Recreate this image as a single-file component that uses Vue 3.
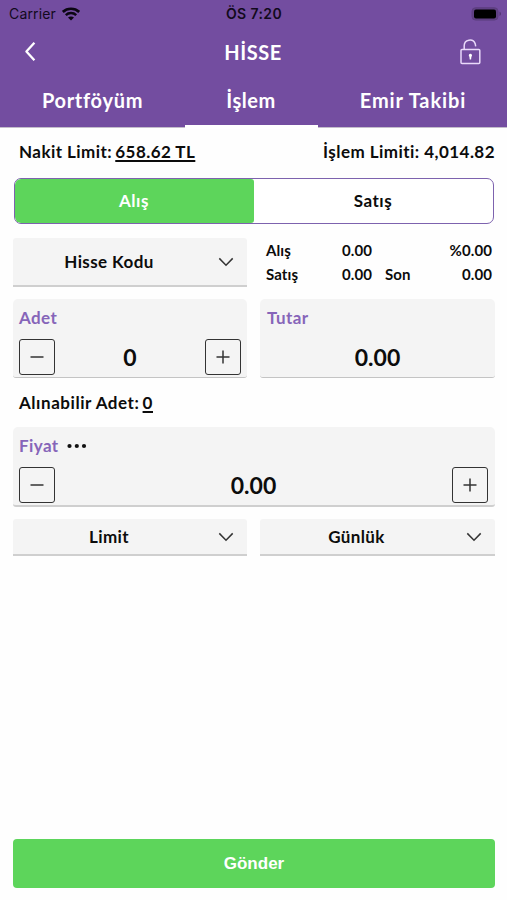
<script setup>
import { ref } from 'vue';

const tabs = ['Portföyüm', 'İşlem', 'Emir Takibi'];
const activeTab = ref(1);
const side = ref('buy');
const quantity = ref(0);
const price = ref(0);

const step = (field, amount) => {
  field.value = Math.max(0, field.value + amount);
};
const stepQuantity = (amount) => step(quantity, amount);
const stepPrice = (amount) => step(price, amount);
</script>

<template>
  <div class="screen">
    <header class="header">
      <div class="status">
        <div class="carrier">
          <span>Carrier</span>
          <svg width="18" height="14" viewBox="0 0 18 14">
            <path d="M.8 4.9C5.2.7 12.8.7 17.2 4.9" fill="none" stroke="#0b0612" stroke-width="2.7" />
            <path d="M3.8 8.1c2.9-2.7 7.5-2.7 10.4 0" fill="none" stroke="#0b0612" stroke-width="2.5" />
            <path d="M6 10.6c1.6-1.5 4.4-1.5 6 0l-3 2.9z" fill="#0b0612" />
          </svg>
        </div>
        <span class="time">ÖS 7:20</span>
        <svg class="battery" width="31" height="14" viewBox="0 0 31 14">
          <rect x="1" y=".7" width="26" height="12.4" rx="3.6" fill="#614184" stroke="#5d3f80" />
          <rect x="3" y="2.4" width="22" height="9" rx="2" fill="#000" />
          <path d="M28.5 4.8c2 .7 2 3.5 0 4.2z" fill="#543676" />
        </svg>
      </div>

      <div class="navbar">
        <svg class="back" width="12" height="21" viewBox="0 0 12 21">
          <path d="M10.4 1.7 2.4 10.5l8 8.8" fill="none" stroke="#fff" stroke-width="2.3" stroke-linejoin="round" />
        </svg>
        <h1 class="title">HİSSE</h1>
        <svg class="lock" width="22" height="27" viewBox="0 0 22 27">
          <g fill="none" stroke="#e9d9fa" stroke-width="1.5">
            <rect x="1" y="11.4" width="18.8" height="14" rx="1" />
            <path d="M4.2 11.4V7.8a5.7 5.7 0 0 1 11-2.1l.5 2.6" />
          </g>
          <path d="M10.4 15.8a1.7 1.7 0 0 1 1 3l-.3 2.7H9.7l-.3-2.7a1.7 1.7 0 0 1 1-3z" fill="#fff" />
        </svg>
      </div>

      <nav class="tabs">
        <a v-for="(tab, i) in tabs" :key="tab" class="tab" :class="{ active: i === activeTab }" @click="activeTab = i">{{ tab }}</a>
      </nav>
    </header>

    <main class="content">
      <div class="limits">
        <span class="cash">Nakit Limit: <u>658.62 TL</u></span>
        <span class="trade">İşlem Limiti: 4,014.82</span>
      </div>

      <div class="segment">
        <button :class="{ selected: side === 'buy' }" @click="side = 'buy'">Alış</button>
        <button :class="{ selected: side === 'sell' }" @click="side = 'sell'">Satış</button>
      </div>

      <div class="row symbol-row">
        <div class="select tall">
          <span>Hisse Kodu</span>
          <svg class="chevron" width="16" height="10" viewBox="0 0 16 10"><path d="m1.3 1.4 6.7 6.8 6.7-6.8" /></svg>
        </div>
        <div class="quotes">
          <span>Alış</span><span class="num">0.00</span><span></span><span class="num">%0.00</span>
          <span>Satış</span><span class="num">0.00</span><span>Son</span><span class="num">0.00</span>
        </div>
      </div>

      <div class="row amount-row">
        <div class="field">
          <div class="label">Adet</div>
          <div class="stepper">
            <button @click="stepQuantity(-1)"><svg width="34" height="34" viewBox="0 0 34 34"><path d="M10.5 17h13" /></svg></button>
            <span class="value">{{ quantity }}</span>
            <button @click="stepQuantity(1)"><svg width="34" height="34" viewBox="0 0 34 34"><path d="M10.5 17h13M17 10.5v13" /></svg></button>
          </div>
        </div>
        <div class="field total">
          <div class="label">Tutar</div>
          <div class="stepper"><span class="value">0.00</span></div>
        </div>
      </div>

      <div class="available">Alınabilir Adet: <u>{{ quantity }}</u></div>

      <div class="field price">
        <div class="label">
          <span>Fiyat</span>
          <svg width="20" height="6" viewBox="0 0 20 6">
            <circle cx="2.5" cy="3" r="2.1" /><circle cx="9.8" cy="3" r="2.1" /><circle cx="17" cy="3" r="2.1" />
          </svg>
        </div>
        <div class="stepper">
          <button @click="stepPrice(-1)"><svg width="34" height="34" viewBox="0 0 34 34"><path d="M10.5 17h13" /></svg></button>
          <span class="value">{{ price.toFixed(2) }}</span>
          <button @click="stepPrice(1)"><svg width="34" height="34" viewBox="0 0 34 34"><path d="M10.5 17h13M17 10.5v13" /></svg></button>
        </div>
      </div>

      <div class="row type-row">
        <div class="select">
          <span>Limit</span>
          <svg class="chevron" width="16" height="10" viewBox="0 0 16 10"><path d="m1.3 1.4 6.7 6.8 6.7-6.8" /></svg>
        </div>
        <div class="select">
          <span>Günlük</span>
          <svg class="chevron" width="16" height="10" viewBox="0 0 16 10"><path d="m1.3 1.4 6.7 6.8 6.7-6.8" /></svg>
        </div>
      </div>

      <button class="submit">Gönder</button>
    </main>
  </div>
</template>

<style>
body { margin: 0; background: #fefefe; }
</style>

<style scoped>
* { box-sizing: border-box; }
.screen {
  width: 507px;
  height: 900px;
  display: flex;
  flex-direction: column;
  background: #fefefe;
  color: #0c0c0c;
  font-family: Lato, sans-serif;
  font-weight: 700;
  font-size: 17px;
  letter-spacing: 0.4px;
  font-variant-ligatures: none;
  overflow: hidden;
}
button { font: inherit; letter-spacing: inherit; color: inherit; padding: 0; margin: 0; border: 0; background: none; }

.header { height: 128px; flex: none; background: #734da0; border-bottom: 1px solid #c3bdca; color: #fff; }
.status {
  height: 27px;
  display: grid;
  grid-template-columns: 1fr auto 1fr;
  align-items: center;
  padding: 0 5px 0 9px;
  color: #120a1c;
  font-family: Inter, sans-serif;
  font-size: 14px;
  font-weight: 400;
}
.carrier { display: flex; align-items: center; gap: 6px; letter-spacing: 0.15px; }
.time { font-weight: 600; letter-spacing: 0.4px; margin-right: 3px; }
.battery { justify-self: end; }
.navbar { height: 49px; display: grid; grid-template-columns: 1fr auto 1fr; align-items: center; padding: 0 25px 0 24px; }
.title { margin: 0; font-size: 20px; line-height: 24px; font-weight: 700; letter-spacing: 0.5px; }
.lock { justify-self: end; }
.tabs { height: 51px; display: grid; grid-template-columns: 185px 133px 189px; }
.tab { border-bottom: 4px solid transparent; line-height: 49px; text-align: center; font-size: 20px; letter-spacing: 0.7px; }
.tab:last-child { letter-spacing: 0.9px; padding-left: 1px; }
.tab.active { border-color: #fff; letter-spacing: 0.5px; padding-right: 1px; }

.content { flex: 1; display: flex; flex-direction: column; padding: 0 12px 12px 13px; }
.limits { height: 50px; display: flex; justify-content: space-between; align-items: center; padding: 0 0 3px 6px; }
.cash { letter-spacing: 0.45px; }
.trade { letter-spacing: 0.45px; }
u { margin-left: -1.5px; text-decoration-thickness: 2px; text-underline-offset: 2px; text-decoration-skip-ink: none; }

.segment {
  height: 46px;
  flex: none;
  display: grid;
  grid-template-columns: 1fr 1fr;
  margin: 0 1px;
  border: 1.5px solid #7d62ae;
  border-radius: 7px;
  overflow: hidden;
  background: #fff;
}
.segment button { padding: 0 1px 2px 0; letter-spacing: 0.5px; }
.segment button.selected { background: #5dd55b; color: #fff; border-radius: 5px 3px 3px 5px; }

.row { display: grid; grid-template-columns: 234px 235px; gap: 13px; }
.symbol-row { margin-top: 14px; }
.select {
  height: 37px;
  display: flex;
  align-items: center;
  padding-right: 13px;
  border-radius: 3px 3px 0 0;
  border-bottom: 2px solid #cfcfcf;
  background: #f4f4f4;
}
.select.tall { height: 49px; }
.select span { flex: 1; text-align: center; padding-right: 13px; }
.chevron path { fill: none; stroke: #333; stroke-width: 1.5; }
.quotes {
  height: 49px;
  display: grid;
  grid-template-columns: 50px 56px 54px 1fr;
  grid-template-rows: 24px 24px;
  line-height: 24px;
  padding: 0 3px 0 6px;
  font-size: 15px;
  letter-spacing: 0.1px;
}
.quotes .num { text-align: right; }
.quotes span:nth-child(4n + 3) { padding-left: 13px; }

.amount-row { margin-top: 12px; }
.field { height: 80px; padding: 8px 6px 0; border-radius: 5px 5px 3px 3px; border-bottom: 2px solid #cfcfcf; background: #f4f4f4; }
.amount-row .field { height: 79px; margin-bottom: 1px; border-bottom: 1px solid #c4c4c4; }
.label { height: 22px; line-height: 22px; color: #8665b9; display: flex; align-items: center; gap: 8px; }
.total .label { padding-left: 1px; }
.label svg { fill: #111; }
.stepper { height: 36px; margin-top: 10px; display: flex; align-items: center; }
.stepper button { width: 36px; height: 36px; border: 1.5px solid #333; border-radius: 3px; display: grid; place-items: center; }
.stepper svg path { stroke: #333; stroke-width: 1.5; fill: none; }
.value { flex: 1; text-align: center; font-size: 23px; letter-spacing: 0; }
.available { height: 48px; line-height: 47px; padding-left: 6px; letter-spacing: 0.55px; }
.price { padding-right: 7px; }
.type-row { margin-top: 12px; }

.submit {
  height: 49px;
  margin-top: auto;
  border-radius: 4px;
  background: #5dd55b;
  color: #fff;
  font-family: "Liberation Sans", Arial, sans-serif;
  letter-spacing: 0;
}
</style>
